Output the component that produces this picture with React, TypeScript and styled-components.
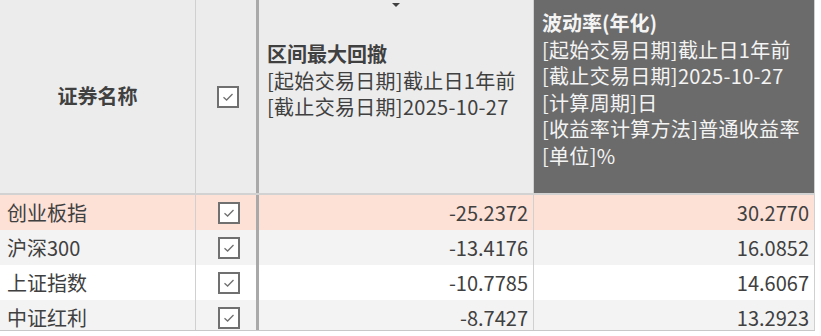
import React from "react";
import styled, { createGlobalStyle } from "styled-components";

const GlobalStyle = createGlobalStyle`
  html, body {
    margin: 0;
    padding: 0;
    background: #ffffff;
  }
  body {
    font-family: "Noto Sans CJK SC", "Noto Sans", sans-serif;
    color: #404040;
  }
`;

const COLS = "196px 63px 275px 281px";

const Frame = styled.div`
  width: 815px;
  height: 331px;
  overflow: hidden;
  border-bottom: 1px solid #c8c8c8;
  box-sizing: border-box;
`;

const HeaderRow = styled.div`
  display: grid;
  grid-template-columns: ${COLS};
  height: 195px;
  border-bottom: 2px solid #d2d2d2;
  box-sizing: border-box;
`;

const HeaderCell = styled.div<{ $dark?: boolean; $thick?: boolean; $top?: number }>`
  position: relative;
  box-sizing: border-box;
  background: ${(p) => (p.$dark ? "#6b6b6b" : "#ececec")};
  color: ${(p) => (p.$dark ? "#f4f4f4" : "#404040")};
  border-right: ${(p) => (p.$thick ? "3px solid #a9a9a9" : "1px solid #d0d0d0")};
  display: flex;
  flex-direction: column;
  justify-content: ${(p) => (p.$top === undefined ? "center" : "flex-start")};
  align-items: ${(p) => (p.$top === undefined ? "center" : "flex-start")};
  padding: ${(p) => (p.$top === undefined ? "0" : `${p.$top}px 0 0 8px`)};
  font-size: 20px;
  line-height: 26.6px;
  letter-spacing: 0.3px;
  white-space: nowrap;
`;

const Title = styled.div`
  font-weight: 700;
  letter-spacing: 0;
`;

const SortMark = styled.div`
  position: absolute;
  top: 3px;
  left: 50%;
  transform: translateX(-50%);
  width: 0;
  height: 0;
  border-left: 4px solid transparent;
  border-right: 4px solid transparent;
  border-top: 4px solid #404040;
`;

const Row = styled.div<{ $bg: string }>`
  display: grid;
  grid-template-columns: ${COLS};
  height: 35px;
  background: ${(p) => p.$bg};
`;

const Cell = styled.div<{ $align?: "left" | "center" | "right"; $thick?: boolean }>`
  box-sizing: border-box;
  display: flex;
  align-items: center;
  justify-content: ${(p) =>
    p.$align === "right" ? "flex-end" : p.$align === "center" ? "center" : "flex-start"};
  padding: 0 5px 0 7px;
  border-right: ${(p) => (p.$thick ? "3px solid #a9a9a9" : "1px solid #d0d0d0")};
  font-size: 20px;
  white-space: nowrap;
`;

const Box = styled.div`
  width: 22px;
  height: 22px;
  box-sizing: border-box;
  border: 2px solid #707070;
  background: #ffffff;
  display: flex;
  align-items: center;
  justify-content: center;
  margin-left: 3px;
`;

const Check = () => (
  <Box>
    <svg width="12" height="10" viewBox="0 0 12 10">
      <path d="M1.5 5.2 L4.6 8 L10.5 2" fill="none" stroke="#707070" strokeWidth="1.3" />
    </svg>
  </Box>
);

const rows = [
  { name: "创业板指", dd: "-25.2372", vol: "30.2770", bg: "#fde1d7" },
  { name: "沪深300", dd: "-13.4176", vol: "16.0852", bg: "#f3f3f3" },
  { name: "上证指数", dd: "-10.7785", vol: "14.6067", bg: "#ffffff" },
  { name: "中证红利", dd: "-8.7427", vol: "13.2923", bg: "#f3f3f3" },
];

export default function App() {
  return (
    <>
      <GlobalStyle />
      <Frame>
        <HeaderRow>
          <HeaderCell>
            <Title>证券名称</Title>
          </HeaderCell>
          <HeaderCell $thick>
            <Check />
          </HeaderCell>
          <HeaderCell $top={41}>
            <SortMark />
            <Title>区间最大回撤</Title>
            <div>[起始交易日期]截止日1年前</div>
            <div>[截止交易日期]2025-10-27</div>
          </HeaderCell>
          <HeaderCell $dark $top={10}>
            <Title>波动率(年化)</Title>
            <div>[起始交易日期]截止日1年前</div>
            <div>[截止交易日期]2025-10-27</div>
            <div>[计算周期]日</div>
            <div>[收益率计算方法]普通收益率</div>
            <div>[单位]%</div>
          </HeaderCell>
        </HeaderRow>
        {rows.map((r) => (
          <Row key={r.name} $bg={r.bg}>
            <Cell>{r.name}</Cell>
            <Cell $align="center" $thick>
              <Check />
            </Cell>
            <Cell $align="right">{r.dd}</Cell>
            <Cell $align="right">{r.vol}</Cell>
          </Row>
        ))}
      </Frame>
    </>
  );
}
